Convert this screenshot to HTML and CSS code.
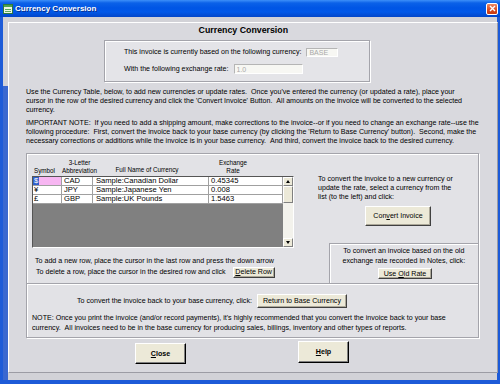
FILE: index.html
```html
<!DOCTYPE html>
<html lang="en">
<head>
    <meta charset="UTF-8">
    <title>Currency Conversion</title>
    <link rel="stylesheet" href="styles.css">
</head>
<body>
    <div class="window">
        <div class="titlebar">
            <svg class="app-icon" width="10" height="10" viewBox="0 0 10 10">
                <rect x="0.5" y="0.5" width="9" height="9" fill="#eef6e4" stroke="#2e7a3c"/>
                <rect x="1" y="1" width="8" height="2" fill="#4ea24e"/>
                <path d="M2 5.5h6M2 7.5h6" stroke="#5cab5c"/>
            </svg>
            <span class="title">Currency Conversion</span>
            <button class="close-btn">
                <svg width="7" height="7" viewBox="0 0 7 7"><path d="M1 1l5 5M6 1l-5 5" stroke="#fff" stroke-width="1.4"/></svg>
            </button>
        </div>

        <div class="client">
            <div class="panel">
                <h1 class="heading">Currency Conversion</h1>

                <div class="base-box">
                    <div class="base-row">
                        <label for="baseCurrency">This invoice is currently based on the following currency:</label>
                        <input id="baseCurrency" class="field field-base" value="BASE" disabled>
                    </div>
                    <div class="base-row">
                        <label for="baseRate">With the following exchange rate:</label>
                        <input id="baseRate" class="field field-rate" value="1.0" disabled>
                    </div>
                </div>

                <p class="info">Use the Currency Table, below, to add new currencies or update rates. &nbsp;Once you've entered the currency (or updated a rate), place your<br>cursor in the row of the desired currency and click the 'Convert Invoice' Button. &nbsp;All amounts on the invoice will be converted to the selected<br>currency.</p>
                <p class="info info-note">IMPORTANT NOTE: &nbsp;If you need to add a shipping amount, make corrections to the invoice--or if you need to change an exchange rate--use the<br>following procedure: &nbsp;First, convert the invoice back to your base currency (by clicking the 'Return to Base Currency' button). &nbsp;Second, make the<br>necessary corrections or additions while the invoice is in your base currency. &nbsp;And third, convert the invoice back to the desired currency.</p>

                <div class="table-section">
                    <div class="upper">
                        <div class="left-col">
                            <div class="grid-head">
                                <div class="head-cell head-symbol">Symbol</div>
                                <div class="head-cell head-abbr">3-Letter<br>Abbreviation</div>
                                <div class="head-cell head-name">Full Name of Currency</div>
                                <div class="head-cell head-rate">Exchange<br>Rate</div>
                            </div>
                            <div class="grid-box">
                                <div class="grid-body">
                                    <div class="grid-row">
                                        <div class="cell cell-symbol cell-active"><span class="sel">$</span></div>
                                        <div class="cell">CAD</div>
                                        <div class="cell cell-name">Sample:Canadian Dollar</div>
                                        <div class="cell cell-rate">0.45345</div>
                                    </div>
                                    <div class="grid-row">
                                        <div class="cell cell-symbol">¥</div>
                                        <div class="cell">JPY</div>
                                        <div class="cell cell-name">Sample:Japanese Yen</div>
                                        <div class="cell cell-rate">0.008</div>
                                    </div>
                                    <div class="grid-row">
                                        <div class="cell cell-symbol">£</div>
                                        <div class="cell">GBP</div>
                                        <div class="cell cell-name">Sample:UK Pounds</div>
                                        <div class="cell cell-rate">1.5463</div>
                                    </div>
                                </div>
                                <div class="scrollbar">
                                    <div class="sb-btn"><span class="arrow-up"></span></div>
                                    <div class="sb-thumb"></div>
                                    <div class="sb-track"></div>
                                    <div class="sb-btn"><span class="arrow-down"></span></div>
                                </div>
                            </div>
                            <div class="row-help">
                                <p>To add a new row, place the cursor in the last row and press the down arrow</p>
                                <div class="delete-line">
                                    <span>To delete a row, place the cursor in the desired row and click</span>
                                    <button class="btn btn-delete"><u>D</u>elete Row</button>
                                </div>
                            </div>
                        </div>

                        <div class="right-col">
                            <p class="convert-text">To convert the invoice to a new currency or<br>update the rate, select a currency from the<br>list (to the left) and click:</p>
                            <button class="btn btn-convert">Con<u>v</u>ert Invoice</button>
                            <div class="old-rate">
                                <p>To convert an invoice based on the old<br>exchange rate recorded in Notes, click:</p>
                                <button class="btn btn-old">Use <u>O</u>ld Rate</button>
                            </div>
                        </div>
                    </div>

                    <div class="lower">
                        <div class="return-row">
                            <span>To convert the invoice back to your base currency, click:</span>
                            <button class="btn btn-return">Return to Base Currency</button>
                        </div>
                        <p class="note">NOTE: Once you print the invoice (and/or record payments), it's highly recommended that you convert the invoice back to your base<br>currency. &nbsp;All invoices need to be in the base currency for producing sales, billings, inventory and other types of reports.</p>
                    </div>
                </div>

                <div class="actions">
                    <button class="btn btn-big btn-close"><u>C</u>lose</button>
                    <button class="btn btn-big btn-help"><u>H</u>elp</button>
                </div>
            </div>
        </div>
    </div>
</body>
</html>
```

FILE: styles.css
```css
* {
    margin: 0;
    padding: 0;
    box-sizing: border-box;
}

body {
    font-family: 'Liberation Sans', Arial, sans-serif;
    font-size: 7.1px;
    color: #000;
    background-color: #1d5bd8;
}

.window {
    width: 500px;
    height: 384px;
    display: flex;
    flex-direction: column;
    background-color: #1d5bd8;
}

/* title bar */
.titlebar {
    height: 17px;
    display: flex;
    align-items: center;
    padding: 0 2px 0 3px;
    background: linear-gradient(#3d8ff9 0, #0b61e8 3px, #0055e5 8px, #0158e8 12px, #0346c8 17px);
}

.app-icon {
    margin-right: 2px;
}

.title {
    color: white;
    font-weight: bold;
    font-size: 8px;
    text-shadow: 1px 1px #0b2f8c;
}

.close-btn {
    margin-left: auto;
    width: 12px;
    height: 12px;
    border: 1px solid #fff;
    border-radius: 2px;
    background: linear-gradient(#ec8a66, #d9481e 60%, #c73a12);
    display: flex;
    align-items: center;
    justify-content: center;
}

/* window body */
.client {
    flex: 1;
    display: flex;
    margin: 0 3px 4px;
    padding: 5px 5px 7px;
    background: linear-gradient(#3a68d0, #3a68d0) 0 69px / 5px 100% no-repeat, #d2d2d7;
}

.panel {
    flex: 1;
    display: flex;
    flex-direction: column;
    background-color: #d9d9de;
    border: 1px solid;
    border-color: #fff #9c9ca4 #9c9ca4 #fff;
    padding: 2px 18px 0 17px;
}

.heading {
    font-size: 8.8px;
    line-height: 11px;
    text-align: center;
    padding-right: 18px;
}

/* base currency box */
.base-box {
    width: 266px;
    height: 42px;
    margin: 4px 0 0 78px;
    padding: 6px 0 0 19px;
    background-color: #e4e4e8;
    border: 1px solid #a4a4ab;
    box-shadow: inset 1px 1px #fff, 1px 1px #fff;
    display: flex;
    flex-direction: column;
    gap: 7px;
}

.base-row {
    height: 10px;
    display: flex;
    align-items: center;
    gap: 5px;
}

.field {
    font-family: inherit;
    font-size: 7px;
    color: #a9a9a9;
    background-color: #f7f7f3;
    border: 1px solid;
    border-color: #b5b5b5 #fff #fff #b5b5b5;
    padding: 0 2px;
}

.field-base {
    width: 32px;
    height: 9px;
}

.field-rate {
    width: 69px;
    height: 10px;
}

.info {
    margin-top: 6px;
    line-height: 9px;
    white-space: nowrap;
}

.info-note {
    margin-top: 4px;
}

/* currency table section */
.table-section {
    margin-top: 7px;
    background-color: #e2e2e6;
    border: 1px solid #a4a4ab;
    box-shadow: inset 1px 1px #fff, 1px 1px #fff;
}

.upper {
    height: 129px;
    display: grid;
    grid-template-columns: 286px 1fr;
}

.left-col {
    padding: 5px 0 0 5px;
}

.grid-head {
    height: 16px;
    display: flex;
    align-items: flex-end;
    font-size: 6.3px;
    line-height: 8px;
}

.head-cell {
    text-align: center;
}

.head-symbol { width: 25px; }
.head-abbr { width: 45px; }
.head-name { width: 90px; padding-bottom: 1.5px; }
.head-rate { width: 82px; }

.grid-box {
    width: 262px;
    height: 72px;
    margin-top: 1px;
    display: flex;
    border: 1px solid;
    border-color: #555 #fff #fff #555;
}

.grid-body {
    flex: 1;
    background-color: #808080;
}

.grid-row {
    display: grid;
    grid-template-columns: 29px 31px 116px 74px;
}

.cell {
    height: 9px;
    background-color: white;
    border-right: 1px solid #a0a0a0;
    border-bottom: 1px solid #a0a0a0;
    padding-left: 2px;
    font-size: 7.6px;
    line-height: 8px;
    white-space: nowrap;
    overflow: hidden;
}

.cell-symbol {
    padding-left: 1px;
}

.cell-name {
    padding-left: 3px;
}

.cell-active {
    padding-left: 0;
    background-color: #f7b6f2;
}

.sel {
    display: inline-block;
    height: 8px;
    padding: 0 1px;
    background-color: #2f5fca;
    color: white;
}

.scrollbar {
    width: 10px;
    display: flex;
    flex-direction: column;
    background-color: #f3f2ec;
}

.sb-btn,
.sb-thumb {
    background-color: #ece9d8;
    border: 1px solid;
    border-color: #fff #808080 #808080 #fff;
}

.sb-btn {
    height: 9px;
    display: flex;
    align-items: center;
    justify-content: center;
}

.sb-thumb {
    height: 17px;
}

.sb-track {
    flex: 1;
}

.arrow-up,
.arrow-down {
    width: 0;
    height: 0;
    border-left: 2.5px solid transparent;
    border-right: 2.5px solid transparent;
}

.arrow-up {
    border-bottom: 3px solid #000;
}

.arrow-down {
    border-top: 3px solid #000;
}

.row-help {
    margin-top: 8px;
    padding-left: 3px;
    line-height: 10px;
    white-space: nowrap;
}

.delete-line {
    height: 12px;
    display: flex;
    align-items: center;
    padding-left: 1px;
}

.btn-delete {
    width: 42px;
    height: 11px;
    margin-left: 7px;
}

.right-col {
    display: flex;
    flex-direction: column;
    align-items: flex-start;
    padding: 20.5px 0 0 5px;
}

.convert-text {
    line-height: 9px;
    white-space: nowrap;
}

.btn-convert {
    width: 66px;
    height: 20px;
    margin: 4.5px 0 0 47px;
    font-size: 7.2px;
}

.old-rate {
    margin: auto 0 0 11px;
    align-self: stretch;
    height: 40px;
    padding-top: 2px;
    border-top: 1px solid #a4a4ab;
    border-left: 1px solid #a4a4ab;
    box-shadow: inset 1px 1px #fff;
}

.old-rate p {
    line-height: 10px;
    text-align: center;
    white-space: nowrap;
}

.btn-old {
    width: 54px;
    height: 11px;
    margin: 2px 0 0 48px;
}

.lower {
    border-top: 1px solid #a4a4ab;
    box-shadow: inset 0 1px #fff;
    padding: 10px 0 4px 5px;
}

.return-row {
    height: 14px;
    display: flex;
    align-items: center;
    gap: 5px;
    padding-left: 45px;
}

.btn-return {
    width: 90px;
    height: 14px;
}

.note {
    margin-top: 5px;
    line-height: 10px;
    white-space: nowrap;
}

/* buttons */
.btn {
    font-family: inherit;
    font-size: 7.1px;
    line-height: 8px;
    color: #000;
    background-color: #ece9d8;
    border: 1px solid;
    border-color: #fff #404040 #404040 #fff;
    box-shadow: inset -1px -1px #aca899;
    padding: 0;
    white-space: nowrap;
}

.actions {
    display: flex;
    align-items: flex-start;
    margin-top: 3px;
    padding-left: 109px;
}

.btn-big {
    width: 51px;
    font-weight: bold;
    border-color: #fff #000 #000 #fff;
    box-shadow: inset -1px -1px #808080;
}

.btn-close {
    height: 21px;
    margin-top: 2px;
}

.btn-help {
    height: 22px;
    margin-left: 112px;
}
```
